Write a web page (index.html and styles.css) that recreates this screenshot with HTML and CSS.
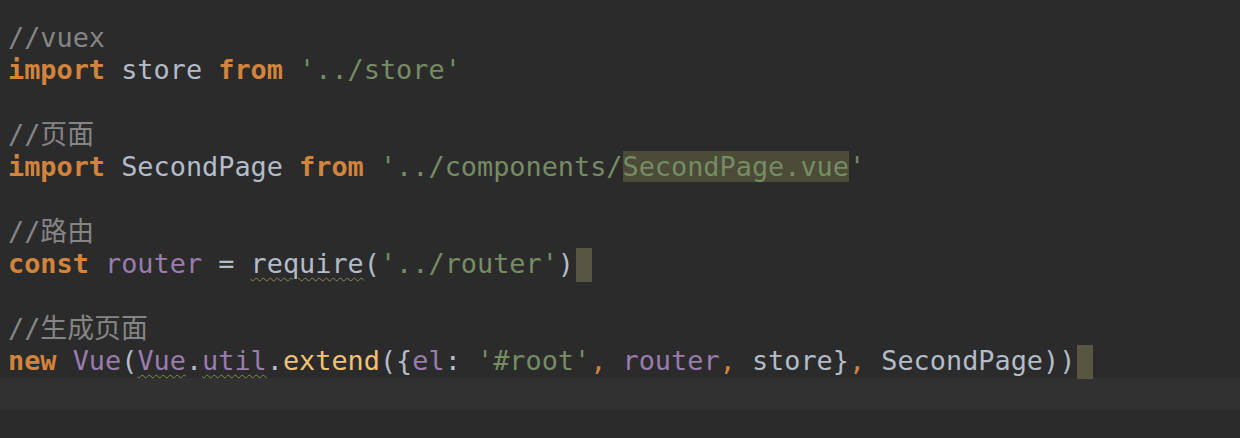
FILE: index.html
```html
<!DOCTYPE html>
<html lang="zh">
<head>
<meta charset="utf-8">
<title>Editor</title>
<link rel="stylesheet" href="styles.css">
</head>
<body>
<div class="editor">
  <div class="line"><span class="cm">//vuex</span></div>
  <div class="line"><span class="kw">import</span> <span class="id">store</span> <span class="kw">from</span> <span class="str">'../store'</span></div>
  <div class="line"> </div>
  <div class="line"><span class="cm">//页面</span></div>
  <div class="line"><span class="kw">import</span> <span class="id">SecondPage</span> <span class="kw">from</span> <span class="str">'../components/<span class="hl">SecondPage.vue</span>'</span></div>
  <div class="line"> </div>
  <div class="line"><span class="cm">//路由</span></div>
  <div class="line"><span class="kw">const</span> <span class="pu">router</span> <span class="id">=</span> <span class="id sq">require</span><span class="id">(</span><span class="str">'../router'</span><span class="id">)</span><span class="caret"></span></div>
  <div class="line"> </div>
  <div class="line"><span class="cm">//生成页面</span></div>
  <div class="line"><span class="kw">new</span> <span class="pu">Vue</span><span class="id">(</span><span class="pu sq">Vue</span><span class="id">.</span><span class="pu sq">util</span><span class="id">.</span><span class="fn">extend</span><span class="id">({</span><span class="pu">el</span><span class="id">:</span> <span class="str">'#root'</span><span class="kwc">,</span> <span class="pu">router</span><span class="kwc">,</span> <span class="id">store}</span><span class="kwc">,</span> <span class="id">SecondPage))</span><span class="caret"></span></div>
  <div class="line current"> </div>
</div>
</body>
</html>
```

FILE: styles.css
```css
html, body {
  margin: 0;
  padding: 0;
  background: #2b2b2b;
}

.editor {
  padding: 22px 0 0 0;
  font-family: "DejaVu Sans Mono", "Noto Sans CJK SC", monospace;
  font-size: 26.86px;
  color: #b3bcc8;
}

.line {
  height: 32.3px;
  line-height: 32.3px;
  padding-left: 8px;
  white-space: pre;
}

.current {
  background: #313131;
  height: 33px;
  box-shadow: inset 0 1px 0 #2a2a2a;
}

.cm {
  color: #858585;
}

.kw {
  color: #d3843c;
  font-weight: bold;
}

.kwc {
  color: #d3843c;
}

.id {
  color: #b3bcc8;
}

.str {
  color: #768c63;
}

.pu {
  color: #9a7cae;
}

.fn {
  color: #f2c373;
}

.hl {
  background: #4b4b38;
}

.sq {
  text-decoration: underline wavy #8c8a55;
  text-decoration-thickness: 1px;
  text-underline-offset: 4px;
}

.caret {
  display: inline-block;
  width: 16px;
  height: 34px;
  margin-left: 2px;
  vertical-align: top;
  background: #575642;
}
```
